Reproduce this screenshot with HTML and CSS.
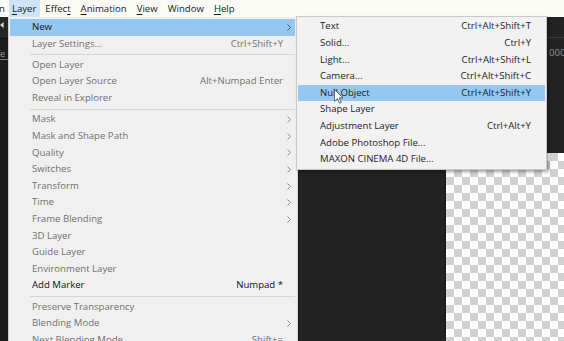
FILE: index.html
```html
<!DOCTYPE html>
<html>
<head>
<meta charset="utf-8">
<link rel="stylesheet" href="styles.css">
</head>
<body>
<div class="menubar">
  <span class="mb-item mb-cut">n</span>
  <span class="mb-item mb-active"><u>L</u>ayer</span>
  <span class="mb-item">Effec<u>t</u></span>
  <span class="mb-item"><u>A</u>nimation</span>
  <span class="mb-item"><u>V</u>iew</span>
  <span class="mb-item">Window</span>
  <span class="mb-item"><u>H</u>elp</span>
</div>
<div class="workspace">
  <div class="strip">
    <div class="strip-top"><span class="strip-icon"></span></div>
    <div class="strip-label">fe</div>
  </div>
  <div class="menu main-menu">
    <div class="item on hl"><span>New</span><span></span><svg class="arr" width="4" height="7" viewBox="0 0 4 7"><path d="M0.5 0.5 L3.5 3.5 L0.5 6.5" /></svg></div>
    <div class="item"><span>Layer Settings...</span><span class="sc">Ctrl+Shift+Y</span><span></span></div>
    <div class="sep"></div>
    <div class="item"><span>Open Layer</span><span></span><span></span></div>
    <div class="item"><span>Open Layer Source</span><span class="sc">Alt+Numpad Enter</span><span></span></div>
    <div class="item"><span>Reveal in Explorer</span><span></span><span></span></div>
    <div class="sep"></div>
    <div class="item"><span>Mask</span><span></span><svg class="arr" width="4" height="7" viewBox="0 0 4 7"><path d="M0.5 0.5 L3.5 3.5 L0.5 6.5" /></svg></div>
    <div class="item"><span>Mask and Shape Path</span><span></span><svg class="arr" width="4" height="7" viewBox="0 0 4 7"><path d="M0.5 0.5 L3.5 3.5 L0.5 6.5" /></svg></div>
    <div class="item"><span>Quality</span><span></span><svg class="arr" width="4" height="7" viewBox="0 0 4 7"><path d="M0.5 0.5 L3.5 3.5 L0.5 6.5" /></svg></div>
    <div class="item"><span>Switches</span><span></span><svg class="arr" width="4" height="7" viewBox="0 0 4 7"><path d="M0.5 0.5 L3.5 3.5 L0.5 6.5" /></svg></div>
    <div class="item"><span>Transform</span><span></span><svg class="arr" width="4" height="7" viewBox="0 0 4 7"><path d="M0.5 0.5 L3.5 3.5 L0.5 6.5" /></svg></div>
    <div class="item"><span>Time</span><span></span><svg class="arr" width="4" height="7" viewBox="0 0 4 7"><path d="M0.5 0.5 L3.5 3.5 L0.5 6.5" /></svg></div>
    <div class="item"><span>Frame Blending</span><span></span><svg class="arr" width="4" height="7" viewBox="0 0 4 7"><path d="M0.5 0.5 L3.5 3.5 L0.5 6.5" /></svg></div>
    <div class="item"><span>3D Layer</span><span></span><span></span></div>
    <div class="item"><span>Guide Layer</span><span></span><span></span></div>
    <div class="item"><span>Environment Layer</span><span></span><span></span></div>
    <div class="item on"><span>Add Marker</span><span class="sc">Numpad *</span><span></span></div>
    <div class="sep"></div>
    <div class="item"><span>Preserve Transparency</span><span></span><span></span></div>
    <div class="item"><span>Blending Mode</span><span></span><svg class="arr" width="4" height="7" viewBox="0 0 4 7"><path d="M0.5 0.5 L3.5 3.5 L0.5 6.5" /></svg></div>
    <div class="item"><span>Next Blending Mode</span><span class="sc">Shift+=</span><span></span></div>
  </div>
  <div class="panel-dark"></div>
  <div class="viewer">
    <div class="viewer-head">
      <div class="vh-bar"></div>
      <div class="vh-time">0000</div>
    </div>
    <div class="checker"></div>
  </div>
  <div class="menu submenu">
    <div class="item"><span>Text</span><span class="sc">Ctrl+Alt+Shift+T</span><span></span></div>
    <div class="item"><span>Solid...</span><span class="sc">Ctrl+Y</span><span></span></div>
    <div class="item"><span>Light...</span><span class="sc">Ctrl+Alt+Shift+L</span><span></span></div>
    <div class="item"><span>Camera...</span><span class="sc">Ctrl+Alt+Shift+C</span><span></span></div>
    <div class="item hl"><span>Null Object</span><span class="sc">Ctrl+Alt+Shift+Y</span><span></span></div>
    <div class="item"><span>Shape Layer</span><span></span><span></span></div>
    <div class="item"><span>Adjustment Layer</span><span class="sc">Ctrl+Alt+Y</span><span></span></div>
    <div class="item"><span>Adobe Photoshop File...</span><span></span><span></span></div>
    <div class="item"><span>MAXON CINEMA 4D File...</span><span></span><span></span></div>
    <svg class="cursor" width="9" height="15" viewBox="0 0 12 20"><path d="M0.5 0.5 L0.5 16.5 L4.5 12.8 L7.2 18.8 L9.6 17.8 L7 11.9 L12 11.9 Z" /></svg>
  </div>
</div>
</body>
</html>
```

FILE: styles.css
```css
html, body {
  margin: 0;
  padding: 0;
}

body {
  width: 564px;
  height: 341px;
  overflow: hidden;
  background: #222222;
  font-family: "Open Sans", "Noto Sans", sans-serif;
  font-size: 9.6px;
}

/* ---------- menu bar ---------- */
.menubar {
  height: 17px;
  display: flex;
  align-items: stretch;
  background: #fbfbf6;
  color: #1a1a1a;
  white-space: nowrap;
}

.mb-item {
  display: flex;
  align-items: center;
  padding: 0 5px;
}

.mb-cut {
  padding: 0 4px 0 0;
  margin-left: -1px;
}

.mb-active {
  background: #cde5f7;
  padding: 0 4px 0 3px;
}

u {
  text-decoration-thickness: 1px;
  text-underline-offset: 1.5px;
}

/* ---------- workspace ---------- */
.workspace {
  position: relative;
  display: grid;
  grid-template-columns: 8px 290px 148px 1fr;
  height: 324px;
}

.strip {
  background: #1c1c1c;
  overflow: hidden;
}

.strip-top {
  height: 22px;
  background: #262626;
  border-bottom: 1px solid #111;
  display: flex;
  align-items: flex-start;
  padding-top: 5px;
  box-sizing: border-box;
}

.strip-icon {
  width: 6px;
  height: 6px;
  background: #d8d8d8;
  clip-path: polygon(0 50%, 60% 0, 60% 100%);
}

.strip-label {
  margin-top: 9px;
  color: #9a9a9a;
  font-size: 9px;
  line-height: 11px;
  border-bottom: 1px solid #777;
  white-space: nowrap;
  margin-left: -3px;
}

/* ---------- menus ---------- */
.menu {
  box-sizing: border-box;
  background: #f0f0f0;
  white-space: nowrap;
}

.main-menu {
  border-left: 1px solid #cfcfcf;
  border-right: 1px solid #d9d9d9;
  padding: 2px 2px 0 1px;
  overflow: hidden;
}

.item {
  display: grid;
  grid-template-columns: 1fr auto 12px;
  align-items: center;
  height: 16.6px;
  line-height: 16.6px;
  padding-left: 22px;
  color: #707070;
}

.item.on {
  color: #111111;
}

.item.hl {
  background: #94c8f3;
}

.arr {
  justify-self: center;
  fill: none;
  stroke: #8c8c8c;
  stroke-width: 1;
}

.item.hl .arr {
  stroke: #4a5a68;
}

.sep {
  height: 4.7px;
  display: flex;
  align-items: center;
  padding-left: 20px;
}

.sep::before {
  content: "";
  flex: 1;
  height: 1px;
  background: #d6d6d6;
}

.submenu {
  position: absolute;
  left: 296px;
  top: -1px;
  width: 251px;
  background: #f2f2f2;
  border: 1px solid #c9c9c9;
  padding: 1.4px 1px;
  box-shadow: 2px 2px 3px rgba(0, 0, 0, 0.35);
}

.submenu .item {
  grid-template-columns: 1fr auto 14px;
  color: #1c1c1c;
}

.cursor {
  position: absolute;
  left: 37px;
  top: 72px;
  fill: #ffffff;
  stroke: #333333;
  stroke-width: 1;
}

/* ---------- dark panel / viewer ---------- */
.panel-dark {
  background: #232323;
  border-left: 1px solid #1a1a1a;
  border-right: 1px solid #1a1a1a;
}

.viewer {
  display: grid;
  grid-template-rows: 136px 1fr;
}

.viewer-head {
  background: #232323;
}

.vh-bar {
  height: 20px;
  border-bottom: 1px solid #3a3a3a;
}

.vh-time {
  margin-top: 9px;
  padding-left: 103px;
  line-height: 12px;
  font-size: 9.6px;
  color: #8f8f8f;
}

.checker {
  background: repeating-conic-gradient(#d2d2d2 0 25%, #ffffff 0 50%) 0 0 / 16px 16px;
}
```
